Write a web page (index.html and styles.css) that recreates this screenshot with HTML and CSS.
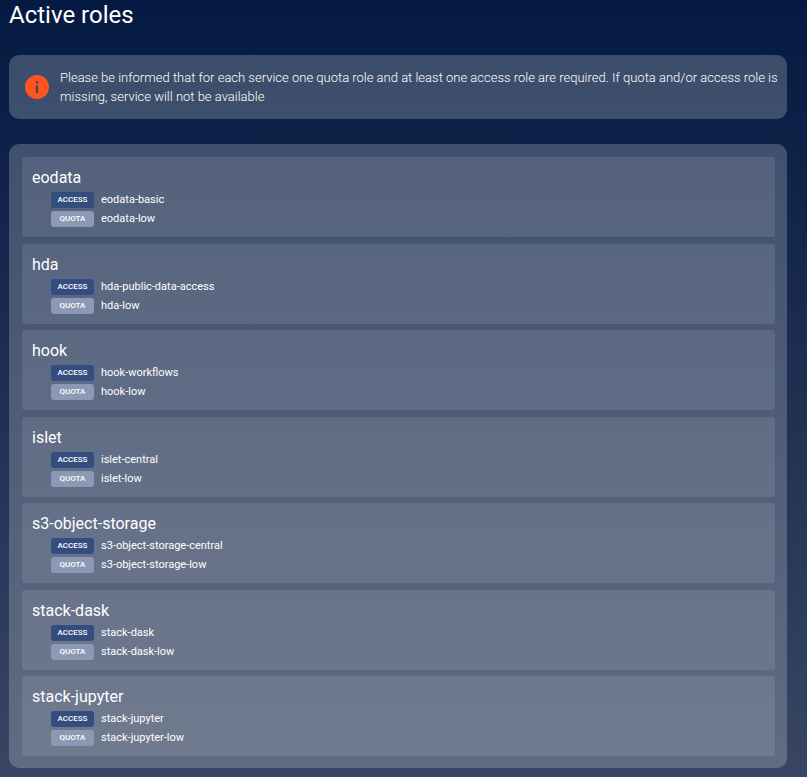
FILE: index.html
```html
<!DOCTYPE html>
<html lang="en">
<head>
<meta charset="utf-8">
<meta name="viewport" content="width=device-width, initial-scale=1">
<title>Active roles</title>
<link rel="stylesheet" href="styles.css">
</head>
<body>
<main class="page">
  <h1 class="title">Active roles</h1>
  <div class="notice" role="note">
    <svg class="notice-icon" viewBox="0 0 24 24" aria-hidden="true"><path fill="currentColor" fill-rule="evenodd" d="M12 0a12 12 0 1 0 0 24a12 12 0 1 0 0-24zM10.8 6h2.4v2.4h-2.4zM10.8 10.5h2.4V18h-2.4z"/></svg>
    <p class="notice-text">Please be informed that for each service one quota role and at least one access role are required. If quota and/or access role is missing, service will not be available</p>
  </div>
  <section class="panel">
    <article class="service">
      <h2 class="service-name">eodata</h2>
      <ul class="roles">
        <li class="role"><span class="badge access">ACCESS</span>eodata-basic</li>
        <li class="role"><span class="badge quota">QUOTA</span>eodata-low</li>
      </ul>
    </article>
    <article class="service">
      <h2 class="service-name">hda</h2>
      <ul class="roles">
        <li class="role"><span class="badge access">ACCESS</span>hda-public-data-access</li>
        <li class="role"><span class="badge quota">QUOTA</span>hda-low</li>
      </ul>
    </article>
    <article class="service">
      <h2 class="service-name">hook</h2>
      <ul class="roles">
        <li class="role"><span class="badge access">ACCESS</span>hook-workflows</li>
        <li class="role"><span class="badge quota">QUOTA</span>hook-low</li>
      </ul>
    </article>
    <article class="service">
      <h2 class="service-name">islet</h2>
      <ul class="roles">
        <li class="role"><span class="badge access">ACCESS</span>islet-central</li>
        <li class="role"><span class="badge quota">QUOTA</span>islet-low</li>
      </ul>
    </article>
    <article class="service">
      <h2 class="service-name">s3-object-storage</h2>
      <ul class="roles">
        <li class="role"><span class="badge access">ACCESS</span>s3-object-storage-central</li>
        <li class="role"><span class="badge quota">QUOTA</span>s3-object-storage-low</li>
      </ul>
    </article>
    <article class="service">
      <h2 class="service-name">stack-dask</h2>
      <ul class="roles">
        <li class="role"><span class="badge access">ACCESS</span>stack-dask</li>
        <li class="role"><span class="badge quota">QUOTA</span>stack-dask-low</li>
      </ul>
    </article>
    <article class="service">
      <h2 class="service-name">stack-jupyter</h2>
      <ul class="roles">
        <li class="role"><span class="badge access">ACCESS</span>stack-jupyter</li>
        <li class="role"><span class="badge quota">QUOTA</span>stack-jupyter-low</li>
      </ul>
    </article>
  </section>
</main>
</body>
</html>
```
FILE: styles.css
```css
* {
  box-sizing: border-box;
}

body {
  margin: 0;
  color: #fff;
  font-family: Roboto, "Liberation Sans", sans-serif;
  background: linear-gradient(#051a42, #0e2248 20%, #384663);
}

.page {
  display: flex;
  flex-direction: column;
  min-height: 100vh;
  padding: 0 20px 9px 9px;
}

.title {
  margin: 0 0 25px;
  font-size: 24px;
  font-weight: 400;
  line-height: 30px;
}

.notice {
  display: flex;
  align-items: center;
  gap: 11px;
  margin-bottom: 25px;
  padding: 13px 6px 13px 16px;
  border-radius: 10px;
  background: rgba(255, 255, 255, 0.21);
}

.notice-icon {
  flex: none;
  width: 24px;
  height: 24px;
  color: #ff5420;
}

.notice-text {
  margin: 0;
  font-size: 13px;
  font-weight: 300;
  line-height: 19px;
}

.panel {
  display: flex;
  flex: 1;
  flex-direction: column;
  justify-content: space-between;
  gap: 6px;
  padding: 13px 12px 12px 13px;
  border-radius: 10px;
  background: rgba(255, 255, 255, 0.21);
}

.service {
  padding: 11px 10px 10px;
  border-radius: 3px;
  background: rgba(255, 255, 255, 0.1);
}

.service-name {
  margin: 0 0 4px;
  font-size: 16px;
  font-weight: 400;
  line-height: 20px;
}

.roles {
  display: grid;
  gap: 3px;
  margin: 0;
  padding: 0 0 0 19px;
  list-style: none;
}

.role {
  display: flex;
  align-items: center;
  gap: 7px;
  font-size: 11px;
  line-height: 16px;
}

.badge {
  width: 43px;
  border-radius: 3px;
  font-size: 8px;
  font-weight: 500;
  text-align: center;
}

.access {
  background: #324d7e;
}

.quota {
  background: #8c99b5;
}
```
